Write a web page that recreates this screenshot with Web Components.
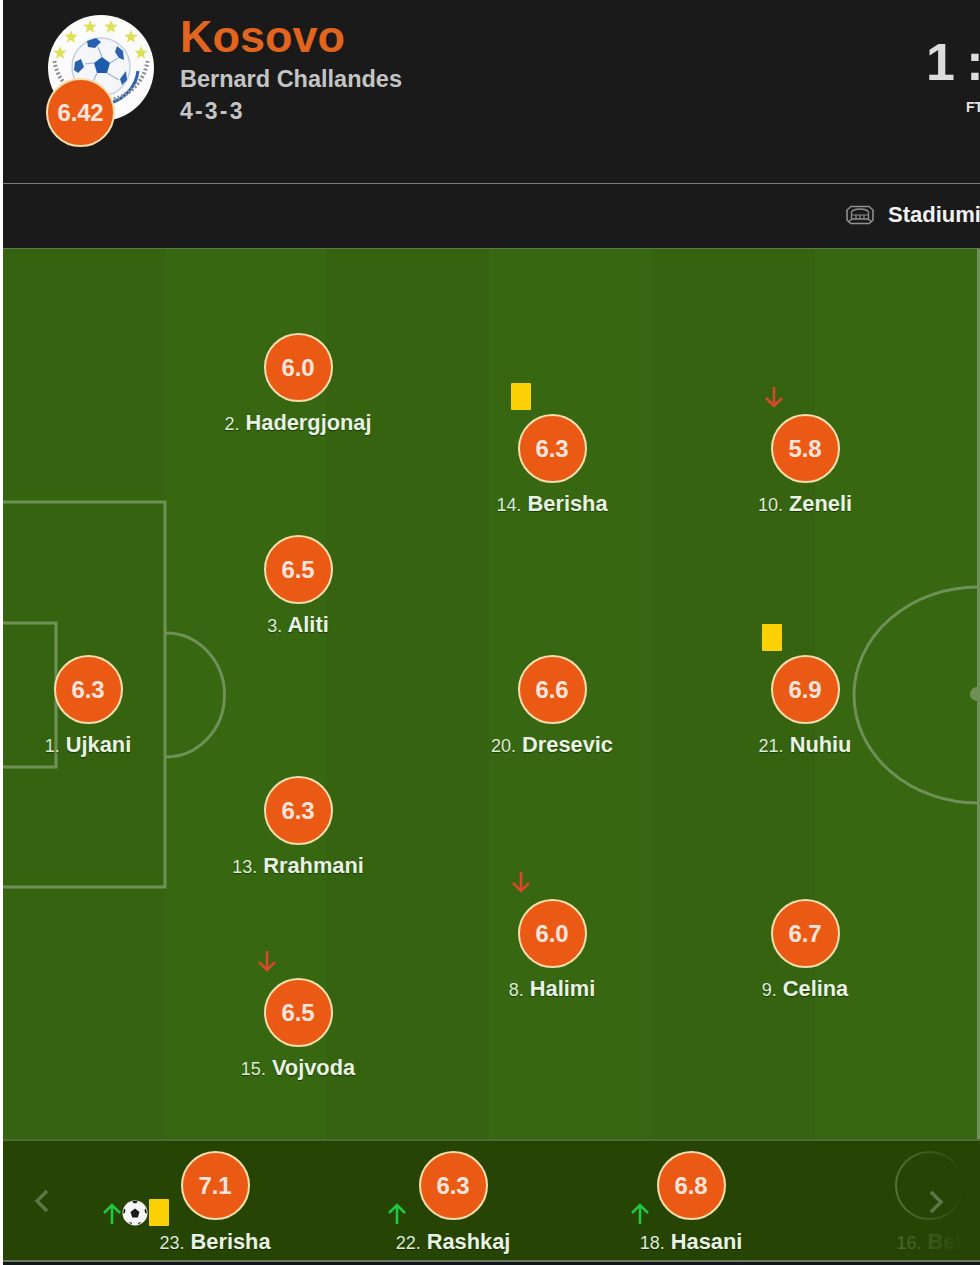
<!DOCTYPE html>
<html lang="en"><head><meta charset="utf-8"><title>Kosovo lineup</title>
<style>
html,body{margin:0;padding:0;background:#fff;height:1265px;overflow:hidden;font-family:"Liberation Sans",Arial,sans-serif}
body{padding-left:3px;box-sizing:border-box;width:980px}
lineup-panel{width:977px;height:1265px}
</style></head><body>
<lineup-panel>
  <match-header team="Kosovo" coach="Bernard Challandes" formation="4-3-3" rating="6.42" score="1 :" status="FT"></match-header>
  <venue-bar>Stadiumi</venue-bar>
  <football-pitch>
    <player-node rating="6.3" no="1." name="Ujkani" x="85" y="442"></player-node>
    <player-node rating="6.0" no="2." name="Hadergjonaj" x="295" y="120"></player-node>
    <player-node rating="6.5" no="3." name="Aliti" x="295" y="322"></player-node>
    <player-node rating="6.3" no="13." name="Rrahmani" x="295" y="563"></player-node>
    <player-node rating="6.5" no="15." name="Vojvoda" x="295" y="765" marks="down"></player-node>
    <player-node rating="6.3" no="14." name="Berisha" x="549" y="201" marks="card"></player-node>
    <player-node rating="6.6" no="20." name="Dresevic" x="549" y="442"></player-node>
    <player-node rating="6.0" no="8." name="Halimi" x="549" y="686" marks="down"></player-node>
    <player-node rating="5.8" no="10." name="Zeneli" x="802" y="201" marks="down"></player-node>
    <player-node rating="6.9" no="21." name="Nuhiu" x="802" y="442" marks="card2"></player-node>
    <player-node rating="6.7" no="9." name="Celina" x="802" y="686"></player-node>
  </football-pitch>
  <bench-bar>
    <player-node rating="7.1" no="23." name="Berisha" marks="up1 ball benchcard"></player-node>
    <player-node rating="6.3" no="22." name="Rashkaj" marks="up2"></player-node>
    <player-node rating="6.8" no="18." name="Hasani" marks="up3"></player-node>
    <player-node ghost rating="" no="16." name="Bel"></player-node>
  </bench-bar>
</lineup-panel>
<script>
const el=(html)=>{const t=document.createElement('template');t.innerHTML=html;return t.content};
class Base extends HTMLElement{
  render(html){ if(!this.shadowRoot) this.attachShadow({mode:'open'}); this.shadowRoot.innerHTML=''; this.shadowRoot.append(el(html)); }
}
class LineupPanel extends Base{connectedCallback(){this.render(`<style>:host{display:flex;flex-direction:column;overflow:hidden;background:#14171a}</style><slot></slot>`)}}
class RatingBadge extends Base{connectedCallback(){this.render(`<style>
:host{display:flex;align-items:center;justify-content:center;box-sizing:border-box;width:69px;height:69px;border-radius:50%;background:#ea5a14;border:2.5px solid #f6dfae;color:#f8e4dc;font:bold 24px/1 "Liberation Sans",Arial,sans-serif;letter-spacing:-.2px;flex:none}
:host([ghost]){background:none;border:2px solid #5a7a46}
</style><slot></slot>`)}}
class TeamLogo extends Base{connectedCallback(){
  const star=(x,y)=>{let p=[];for(let i=0;i<10;i++){const r=i%2?3:7,a=-Math.PI/2+i*Math.PI/5;p.push((x+r*Math.cos(a)).toFixed(1)+','+(y+r*Math.sin(a)).toFixed(1))}return `<polygon points="${p.join(' ')}" fill="#dfe05a"/>`};
  this.render(`<style>:host{display:block;width:106px;height:106px;flex:none}svg{display:block}</style>
  <svg width="106" height="106" viewBox="0 0 106 106">
   <circle cx="53" cy="53" r="53" fill="#fbfbfb"/>
   ${star(42,12)+star(63,12)+star(23,22)+star(83,22)+star(12,38)+star(93,38)}
   <circle cx="53" cy="52" r="29" fill="#f4f6fa" stroke="#c3d0e4" stroke-width="1.5"/>
   <polygon points="54,42 62,48 59,58 49,58 46,48" fill="#1d5cab"/>
   <path d="M39 26 L48 23 L53 27 L47 33 L40 32 Z" fill="#2a62ad"/>
   <path d="M69 31 L75 36 L76 45 L71 43 L67 37 Z" fill="#2a62ad"/>
   <path d="M27 47 L33 44 L36 52 L30 58 L26 55 Z" fill="#2a62ad"/>
   <path d="M72 64 L78 56 L79 65 L74 70 Z" fill="#2a62ad"/>
   <path d="M54 42 L50 32 M62 48 L70 43 M46 48 L37 49 M49 58 L44 69 M59 58 L71 65" stroke="#9eb4d2" stroke-width="1.2"/>
   <path d="M90 56 A38 38 0 0 1 62 88" fill="none" stroke="#2a62ad" stroke-width="3"/>
   <path d="M6.500 46 A47 47 0 0 0 99.500 46" fill="none" stroke="#8b8f99" stroke-width="4" stroke-dasharray="2 2"/>
  </svg>`)}}
class MatchHeader extends Base{connectedCallback(){const a=n=>this.getAttribute(n);this.render(`<style>
:host{display:flex;flex:none;box-sizing:border-box;height:184px;border-bottom:1px solid #7c7c7c;background:#1a1a1a;padding:15px 0 0 45px;overflow:hidden;font-family:"Liberation Sans",Arial,sans-serif}
.crest{position:relative;width:106px;height:132px;flex:none;margin-right:26px}
rating-badge{position:absolute;left:-2px;top:63px}
.info{display:flex;flex-direction:column;flex:none;width:601px}
.team{font:bold 45px/44px "Liberation Sans",Arial,sans-serif;color:#e1641f}
.coach{font:bold 23.500px/32px "Liberation Sans",Arial,sans-serif;color:#c4c4c4;margin-top:4px}
.form{font:bold 23px/32px "Liberation Sans",Arial,sans-serif;color:#c4c4c4;letter-spacing:2.200px}
.score{flex:none;margin-left:145px;display:flex;flex-direction:column;align-items:flex-start;width:120px}
.num{font:bold 52px/60px "Liberation Sans",Arial,sans-serif;color:#dcdcdc;white-space:pre;margin-top:17px;word-spacing:-3px}
.st{font:bold 14px/18px "Liberation Sans",Arial,sans-serif;color:#e4e4e4;margin:6px 0 0 40px}
</style>
<div class="crest"><team-logo></team-logo><rating-badge>${a('rating')}</rating-badge></div>
<div class="info"><div class="team">${a('team')}</div><div class="coach">${a('coach')}</div><div class="form">${a('formation')}</div></div>
<div class="score"><div class="num">${a('score')}</div><div class="st">${a('status')}</div></div>`)}}
class VenueBar extends Base{connectedCallback(){this.render(`<style>
:host{display:flex;flex:none;align-items:center;box-sizing:border-box;height:64px;padding:0 0 2px 843px;gap:14px;background:#1a1a1a;color:#f2f2f2;font:bold 22px/1 "Liberation Sans",Arial,sans-serif;white-space:nowrap;overflow:hidden}
svg{display:block;flex:none}
</style>
<svg width="28" height="20" viewBox="0 0 28 20" fill="none" stroke="#8f8f8f" stroke-width="1.600">
<path d="M5 1.500H23L27 5V15L23 18.500H5L1 15V5Z"/>
<path d="M5.500 7C7 4.500 10 4 14 4S21 4.500 22.500 7V14H5.500Z" stroke-width="1.300"/>
<path d="M10 14V10H18V14M14 10V14M5.500 10H10M18 10H22.500M2 17l4-3M26 17l-4-3" stroke-width="1.200"/>
</svg><slot></slot>`)}}
class FootballPitch extends Base{connectedCallback(){this.render(`<style>
:host{display:block;flex:none;position:relative;height:891px;overflow:hidden;border-top:1px solid #5f7a50;box-sizing:border-box;
background:linear-gradient(90deg,#35630f 0 163px,#376710 163px 323px,#35630f 323px 486px,#376710 486px 649px,#35630f 649px 812px,#376710 812px 974px)}
svg{position:absolute;left:0;top:0}
</style>
<svg width="977" height="890" viewBox="0 0 977 890" fill="none" stroke="#6f9158" stroke-width="3">
<path d="M-3 253H162V638H-3"/>
<path d="M-3 374H53V518H-3"/>
<path d="M163 384A58.500 62 0 0 1 163 508"/>
<ellipse cx="975" cy="446" rx="124" ry="108"/>
<path d="M975.500 0V890"/>
<circle cx="974" cy="445" r="7" fill="#6f9158" stroke="none"/>
</svg><slot></slot>`)}}
class BenchBar extends Base{connectedCallback(){this.render(`<style>
:host{display:flex;flex:none;position:relative;box-sizing:border-box;height:123px;background:#264504;border-top:2px solid #4d6b3a;border-bottom:2px solid #6a7a63;padding:10px 0 0 93px;overflow:hidden}
.fade{position:absolute;right:0;top:0;bottom:0;width:100px;background:linear-gradient(90deg,rgba(38,69,4,0) 0,rgba(38,69,4,.35) 30%,rgba(38,69,4,.75) 65%,#264504 85%);pointer-events:none}
svg{position:absolute}
.l{left:30px;top:47px}.r{left:926px;top:48px}
</style><slot></slot><div class="fade"></div>
<svg class="l" width="16" height="26" viewBox="0 0 16 26" fill="none" stroke="#5b7748" stroke-width="3.500"><path d="M14 3L4 13l10 10"/></svg>
<svg class="r" width="16" height="26" viewBox="0 0 16 26" fill="none" stroke="#5b7748" stroke-width="3.500"><path d="M2 3l10 10L2 23"/></svg>`)}}
const arrow=(c,d)=>`<svg class="a" width="20" height="22" viewBox="0 0 20 22" fill="none" stroke="${c}" stroke-width="2.600"><path d="${d}"/></svg>`;
const UP=arrow('#22c83f','M10 21V2M2 10l8-8 8 8');
const ICONS={
 card:`<div class="card" style="left:59px;top:-31px"></div>`,
 card2:`<div class="card" style="left:57px;top:-31px"></div>`,
 benchcard:`<div class="card" style="left:34px;top:48px"></div>`,
 down:`<span class="m" style="left:59px;top:-28px">${arrow('#d8492c','M10 1V20M2 12l8 8 8-8')}</span>`,
 up1:`<span class="m" style="left:-13px;top:52px">${UP}</span>`,
 up2:`<span class="m" style="left:34px;top:52px">${UP}</span>`,
 up3:`<span class="m" style="left:39px;top:52px">${UP}</span>`,
 ball:`<svg class="m" style="left:7px;top:49px" width="26" height="26" viewBox="0 0 26 26"><circle cx="13" cy="13" r="12.500" fill="#f6f6f6"/><polygon points="13,8.500 17.500,12 15.800,17.500 10.200,17.500 8.500,12" fill="#1a1a1a"/><path d="M10.500 1h5l-1 2.200h-3zM24 8.500l1 5-1.800-.6-.7-3zM2 8.500l-1 5 1.800-.6.700-3zM6.500 22.500l2.500-.3 1.500 2.300zM19.500 22.500l-2.500-.3-1.500 2.300z" fill="#1a1a1a"/></svg>`
};
class PlayerNode extends Base{connectedCallback(){
  const a=n=>this.getAttribute(n)||'';const x=a('x'),y=a('y');
  const onPitch=this.parentElement.tagName==='FOOTBALL-PITCH';
  const marks=a('marks').split(' ').filter(Boolean).map(k=>ICONS[k]).join('');
  this.render(`<style>
:host{display:flex;flex-direction:column;align-items:center;width:${onPitch?200:238}px;flex:none;font-family:"Liberation Sans",Arial,sans-serif;${onPitch?`position:absolute;left:${x-100}px;top:${y-36}px;`:''}}
.wrap{position:relative;width:200px;height:69px;display:flex;justify-content:center}
.m{position:absolute;display:block}
.a{display:block}
.card{position:absolute;width:20px;height:27px;background:#fbd005;border-radius:1px}
.name{margin-top:${onPitch?9:10}px;font:bold 21.800px/24px "Liberation Sans",Arial,sans-serif;color:#e9f3e4;text-shadow:0 1px 1px rgba(0,0,0,.45);white-space:nowrap}
.no{font-weight:normal;font-size:18px;color:#dcecd4}
:host([ghost]) .name,:host([ghost]) .no{color:#55753f;text-shadow:none}
</style><div class="wrap"><rating-badge ${this.hasAttribute('ghost')?'ghost':''}>${a('rating')}</rating-badge>${marks}</div>
<div class="name"><span class="no">${a('no')}</span> ${a('name')}</div>`)}}
[['rating-badge',RatingBadge],['team-logo',TeamLogo],['lineup-panel',LineupPanel],['match-header',MatchHeader],['venue-bar',VenueBar],['football-pitch',FootballPitch],['bench-bar',BenchBar],['player-node',PlayerNode]].forEach(([n,c])=>customElements.define(n,c));
</script>
</body></html>
